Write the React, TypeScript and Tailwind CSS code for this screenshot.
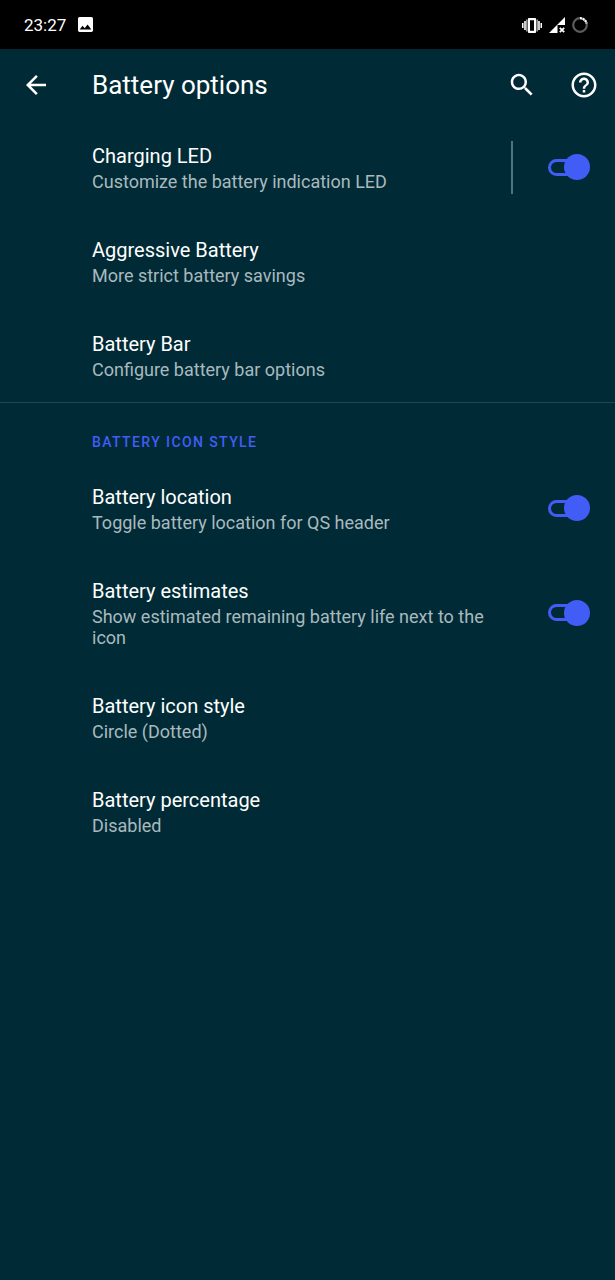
import React, { useState } from "react";

type Option = {
  id: string;
  title: string;
  summary: string;
  toggle?: boolean;
  split?: boolean;
};

const generalOptions: Option[] = [
  { id: "led", title: "Charging LED", summary: "Customize the battery indication LED", toggle: true, split: true },
  { id: "aggressive", title: "Aggressive Battery", summary: "More strict battery savings" },
  { id: "bar", title: "Battery Bar", summary: "Configure battery bar options" },
];

const iconOptions: Option[] = [
  { id: "location", title: "Battery location", summary: "Toggle battery location for QS header", toggle: true },
  { id: "estimates", title: "Battery estimates", summary: "Show estimated remaining battery life next to the icon", toggle: true },
  { id: "style", title: "Battery icon style", summary: "Circle (Dotted)" },
  { id: "percentage", title: "Battery percentage", summary: "Disabled" },
];

function StatusBar() {
  return (
    <div className="flex h-[49px] items-center justify-between bg-black pl-6 pr-[27px] text-white">
      <div className="flex items-center gap-3">
        <span className="text-[17px] leading-6">23:27</span>
        <svg className="h-[15px] w-[15px]" viewBox="3 3 18 18" fill="currentColor">
          <path d="M21 19V5c0-1.1-.9-2-2-2H5c-1.1 0-2 .9-2 2v14c0 1.1.9 2 2 2h14c1.1 0 2-.9 2-2zM8.500 13.500l2.500 3.010L14.500 12l4.500 6H5l3.500-4.500z" />
        </svg>
      </div>
      <div className="flex items-center gap-[7px]">
        <svg className="h-5 w-5" viewBox="0 0 20 20" fill="currentColor">
          <path d="M0 8h1.500v5H0zM2.200 6h1.600v9H2.200zM16.200 6h1.600v9h-1.600zM18.500 8H20v5h-1.500zM4.400 4.500h1v12h-1zM14.600 4.500h1v12h-1z" />
          <path d="M7 3h6c.6 0 1 .4 1 1v13c0 .6-.4 1-1 1H7c-.6 0-1-.4-1-1V4c0-.6.4-1 1-1zm1 2.200v10.600h4V5.200z" fillRule="evenodd" />
        </svg>
        <svg className="h-4 w-4" viewBox="0 0 16 16">
          <path d="M16 0v8H8.500v8H0z" fill="currentColor" />
          <path d="M10.800 10.800l4.400 4.400M15.200 10.800l-4.400 4.400" stroke="currentColor" strokeWidth="1.800" />
        </svg>
        <svg className="h-4 w-4" viewBox="0 0 16 16" fill="none" strokeWidth="2.200">
          <circle cx="8" cy="8" r="6.800" stroke="#5c5c5c" />
          <path d="M8 1.200A6.800 6.800 0 0 1 14.600 6.500" stroke="currentColor" strokeDasharray="2 0.700" />
        </svg>
      </div>
    </div>
  );
}

function Header() {
  return (
    <header className="flex h-[71px] items-center pl-[18px] pr-4">
      <button type="button" aria-label="Back" className="flex w-9 justify-center">
        <svg className="h-[30px] w-[30px]" viewBox="0 0 24 24" fill="currentColor">
          <path d="M20 11H7.830l5.590-5.590L12 4l-8 8 8 8 1.410-1.410L7.830 13H20v-2z" />
        </svg>
      </button>
      <h1 className="ml-[38px] flex-1 text-[26px] leading-8">Battery options</h1>
      <button type="button" aria-label="Search" className="mr-8">
        <svg className="h-[30px] w-[30px]" viewBox="0 0 24 24" fill="currentColor">
          <path d="M15.500 14h-.79l-.28-.27C15.410 12.590 16 11.110 16 9.500 16 5.910 13.090 3 9.500 3S3 5.910 3 9.500 5.910 16 9.500 16c1.610 0 3.090-.59 4.230-1.570l.27.28v.79l5 4.990L20.490 19l-4.990-5zm-6 0C7.010 14 5 11.990 5 9.500S7.010 5 9.500 5 14 7.010 14 9.500 11.990 14 9.500 14z" />
        </svg>
      </button>
      <button type="button" aria-label="Help">
        <svg className="h-[30px] w-[30px]" viewBox="0 0 24 24" fill="currentColor">
          <path d="M11 18h2v-2h-2v2zm1-16C6.480 2 2 6.480 2 12s4.480 10 10 10 10-4.480 10-10S17.520 2 12 2zm0 18c-4.410 0-8-3.590-8-8s3.590-8 8-8 8 3.590 8 8-3.590 8-8 8zm0-14c-2.210 0-4 1.790-4 4h2c0-1.100.9-2 2-2s2 .9 2 2c0 2-3 1.750-3 5h2c0-2.250 3-2.500 3-5 0-2.210-1.790-4-4-4z" />
        </svg>
      </button>
    </header>
  );
}

function Switch({ id }: { id: string }) {
  const [checked, setChecked] = useState(true);

  return (
    <label className="flex cursor-pointer items-center">
      <input
        id={id}
        type="checkbox"
        role="switch"
        aria-labelledby={`${id}-title`}
        className="peer sr-only"
        checked={checked}
        onChange={(e) => setChecked(e.target.checked)}
      />
      <span className="flex h-[17px] w-[42px] items-center rounded-full peer-focus-visible:outline-2">
        <span className={`h-[17px] w-8 rounded-full border-[3px] ${checked ? "border-[#425df5]" : "border-[#7f959b]"}`}></span>
        <span className={`h-[26px] w-[26px] shrink-0 rounded-full ${checked ? "-ml-4 bg-[#425df5]" : "-ml-8 bg-[#7f959b]"}`}></span>
      </span>
    </label>
  );
}

function OptionRow({ option }: { option: Option }) {
  return (
    <li className="flex items-center pl-[92px] pr-[25px]">
      <div className="flex-1 pt-[22px] pb-[22px]">
        <p id={`${option.id}-title`} className="text-[20px] leading-[29px]">{option.title}</p>
        <p className="max-w-[410px] text-[18px] leading-[21px] text-[#a9b9be]">{option.summary}</p>
      </div>
      {option.split && <div className="mr-[35px] h-[53px] w-[2px] bg-[#4f747b]"></div>}
      {option.toggle && <Switch id={option.id} />}
    </li>
  );
}

export default function App() {
  return (
    <div className="min-h-screen bg-[#002b36] font-['Roboto',sans-serif] text-white">
      <StatusBar />
      <Header />
      <main>
        <ul>
          {generalOptions.map((x) => (
            <OptionRow key={x.id} option={x} />
          ))}
        </ul>
        <section className="border-t border-[#24464f]">
          <h2 className="pl-[92px] pt-[29px] pb-[9px] text-[14px] leading-5 font-medium tracking-widest text-[#425df5]">
            BATTERY ICON STYLE
          </h2>
          <ul>
            {iconOptions.map((x) => (
              <OptionRow key={x.id} option={x} />
            ))}
          </ul>
        </section>
      </main>
    </div>
  );
}
